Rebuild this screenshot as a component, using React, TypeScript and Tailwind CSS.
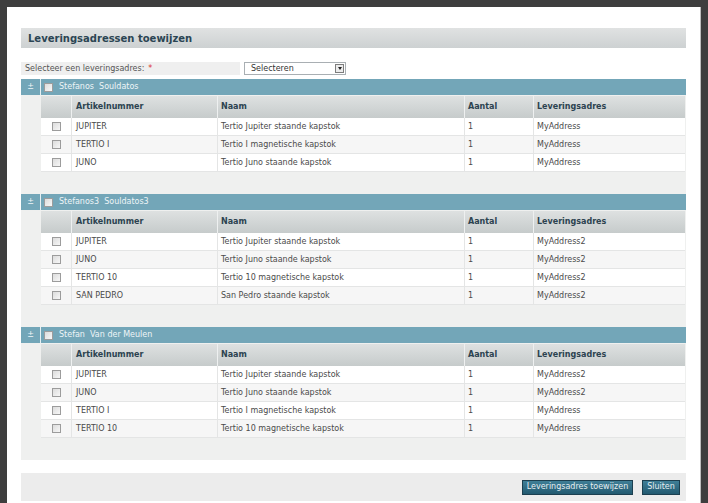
import React from "react";

type Row = [string, string, string, string];

const groups: { name: string; rows: Row[] }[] = [
  {
    name: "Stefanos\u00a0\u00a0Souldatos",
    rows: [
      ["JUPITER", "Tertio Jupiter staande kapstok", "1", "MyAddress"],
      ["TERTIO I", "Tertio I magnetische kapstok", "1", "MyAddress"],
      ["JUNO", "Tertio Juno staande kapstok", "1", "MyAddress"],
    ],
  },
  {
    name: "Stefanos3\u00a0\u00a0Souldatos3",
    rows: [
      ["JUPITER", "Tertio Jupiter staande kapstok", "1", "MyAddress2"],
      ["JUNO", "Tertio Juno staande kapstok", "1", "MyAddress2"],
      ["TERTIO 10", "Tertio 10 magnetische kapstok", "1", "MyAddress2"],
      ["SAN PEDRO", "San Pedro staande kapstok", "1", "MyAddress2"],
    ],
  },
  {
    name: "Stefan\u00a0\u00a0Van der Meulen",
    rows: [
      ["JUPITER", "Tertio Jupiter staande kapstok", "1", "MyAddress2"],
      ["JUNO", "Tertio Juno staande kapstok", "1", "MyAddress2"],
      ["TERTIO I", "Tertio I magnetische kapstok", "1", "MyAddress"],
      ["TERTIO 10", "Tertio 10 magnetische kapstok", "1", "MyAddress"],
    ],
  },
];

function Check() {
  return (
    <div className="w-[9px] h-[9px] border border-[#9c9c9c] bg-gradient-to-br from-[#dcdcdc] to-[#f7f7f7]" />
  );
}

function Group({ name, rows }: { name: string; rows: Row[] }) {
  return (
    <div className="flex flex-col">
      <div className="h-[16px] bg-[#73a6b8] flex items-center text-[8px] text-[#eef5f7]">
        <div className="w-[20px] h-full flex items-center justify-center border-r border-[#e6f0f3]">
          ±
        </div>
        <div className="ml-[3px]">
          <Check />
        </div>
        <div className="ml-[6px] whitespace-pre">{name}</div>
      </div>
      <div className="flex bg-[#eff0ef] pt-[1px] pb-[22px]">
        <div className="w-[20px]" />
        <div className="w-[644px] flex flex-col">
          <div className="h-[22px] flex bg-gradient-to-b from-[#dee1e1] to-[#c6cbcb] text-[8px] font-bold text-[#2c4350]">
            <div className="w-[31px] border-r border-[#eef0f0]" />
            <div className="w-[146px] border-r border-[#eef0f0] flex items-center pl-[4px]">Artikelnummer</div>
            <div className="w-[247px] border-r border-[#eef0f0] flex items-center pl-[3px]">Naam</div>
            <div className="w-[69px] border-r border-[#eef0f0] flex items-center pl-[3px]">Aantal</div>
            <div className="w-[151px] flex items-center pl-[3px]">Leveringsadres</div>
          </div>
          {rows.map((r, i) => (
            <div
              key={i}
              className={
                "h-[18px] flex border-b border-[#e4e5e5] text-[8px] text-[#4a4a4a] " +
                (i % 2 === 1 ? "bg-[#f6f6f6]" : "bg-white")
              }
            >
              <div className="w-[31px] border-r border-[#e4e5e5] flex items-center justify-center">
                <Check />
              </div>
              <div className="w-[146px] border-r border-[#e4e5e5] flex items-center pl-[4px]">{r[0]}</div>
              <div className="w-[247px] border-r border-[#e4e5e5] flex items-center pl-[3px]">{r[1]}</div>
              <div className="w-[69px] border-r border-[#e4e5e5] flex items-center pl-[3px]">{r[2]}</div>
              <div className="w-[151px] flex items-center pl-[3px]">{r[3]}</div>
            </div>
          ))}
        </div>
      </div>
    </div>
  );
}

export default function App() {
  return (
    <div className="w-[708px] h-[503px] overflow-hidden bg-[#3e3e3e] pl-[7px] pt-[7px] font-['DejaVu_Sans',Verdana,sans-serif]">
      <div className="w-[693px] h-[496px] bg-white px-[14px] pt-[21px] flex flex-col shadow-[1px_0_0_#bdbdbd]">
        <div className="h-[20px] bg-gradient-to-b from-[#e0e2e2] to-[#cdd1d2] flex items-center pl-[7px] text-[10px] font-bold text-[#2b4553]">
          Leveringsadressen toewijzen
        </div>
        <div className="mt-[14px] h-[13px] flex">
          <div className="w-[219px] bg-[#efefef] flex items-center pl-[4px] text-[8px] text-[#555]">
            Selecteer een leveringsadres:<span className="ml-[4px] text-[#d33]">*</span>
          </div>
          <div className="ml-[4px] w-[102px] border border-[#a9afb3] bg-white flex items-center justify-between pl-[6px] pr-[1px] text-[8px] text-[#333]">
            <span>Selecteren</span>
            <div className="w-[9px] h-[9px] border border-[#7d7d7d] bg-[#ececec] flex items-center justify-center">
              <div className="w-0 h-0 border-l-[2.5px] border-r-[2.5px] border-t-[3px] border-l-transparent border-r-transparent border-t-[#222]" />
            </div>
          </div>
        </div>
        <div className="mt-[4px] flex flex-col">
          {groups.map((g, i) => (
            <Group key={i} name={g.name} rows={g.rows} />
          ))}
        </div>
        <div className="mt-[13px] h-[28px] bg-[#ececec] flex items-center justify-end pr-[6px] gap-[9px]">
          <div className="w-[111px] h-[15px] border border-[#1c3f4f] bg-gradient-to-b from-[#3f7f97] to-[#235a70] flex items-center justify-center text-[8px] text-[#e6eef1]">
            Leveringsadres toewijzen
          </div>
          <div className="w-[38px] h-[15px] border border-[#1c3f4f] bg-gradient-to-b from-[#3f7f97] to-[#235a70] flex items-center justify-center text-[8px] text-[#e6eef1]">
            Sluiten
          </div>
        </div>
      </div>
    </div>
  );
}
